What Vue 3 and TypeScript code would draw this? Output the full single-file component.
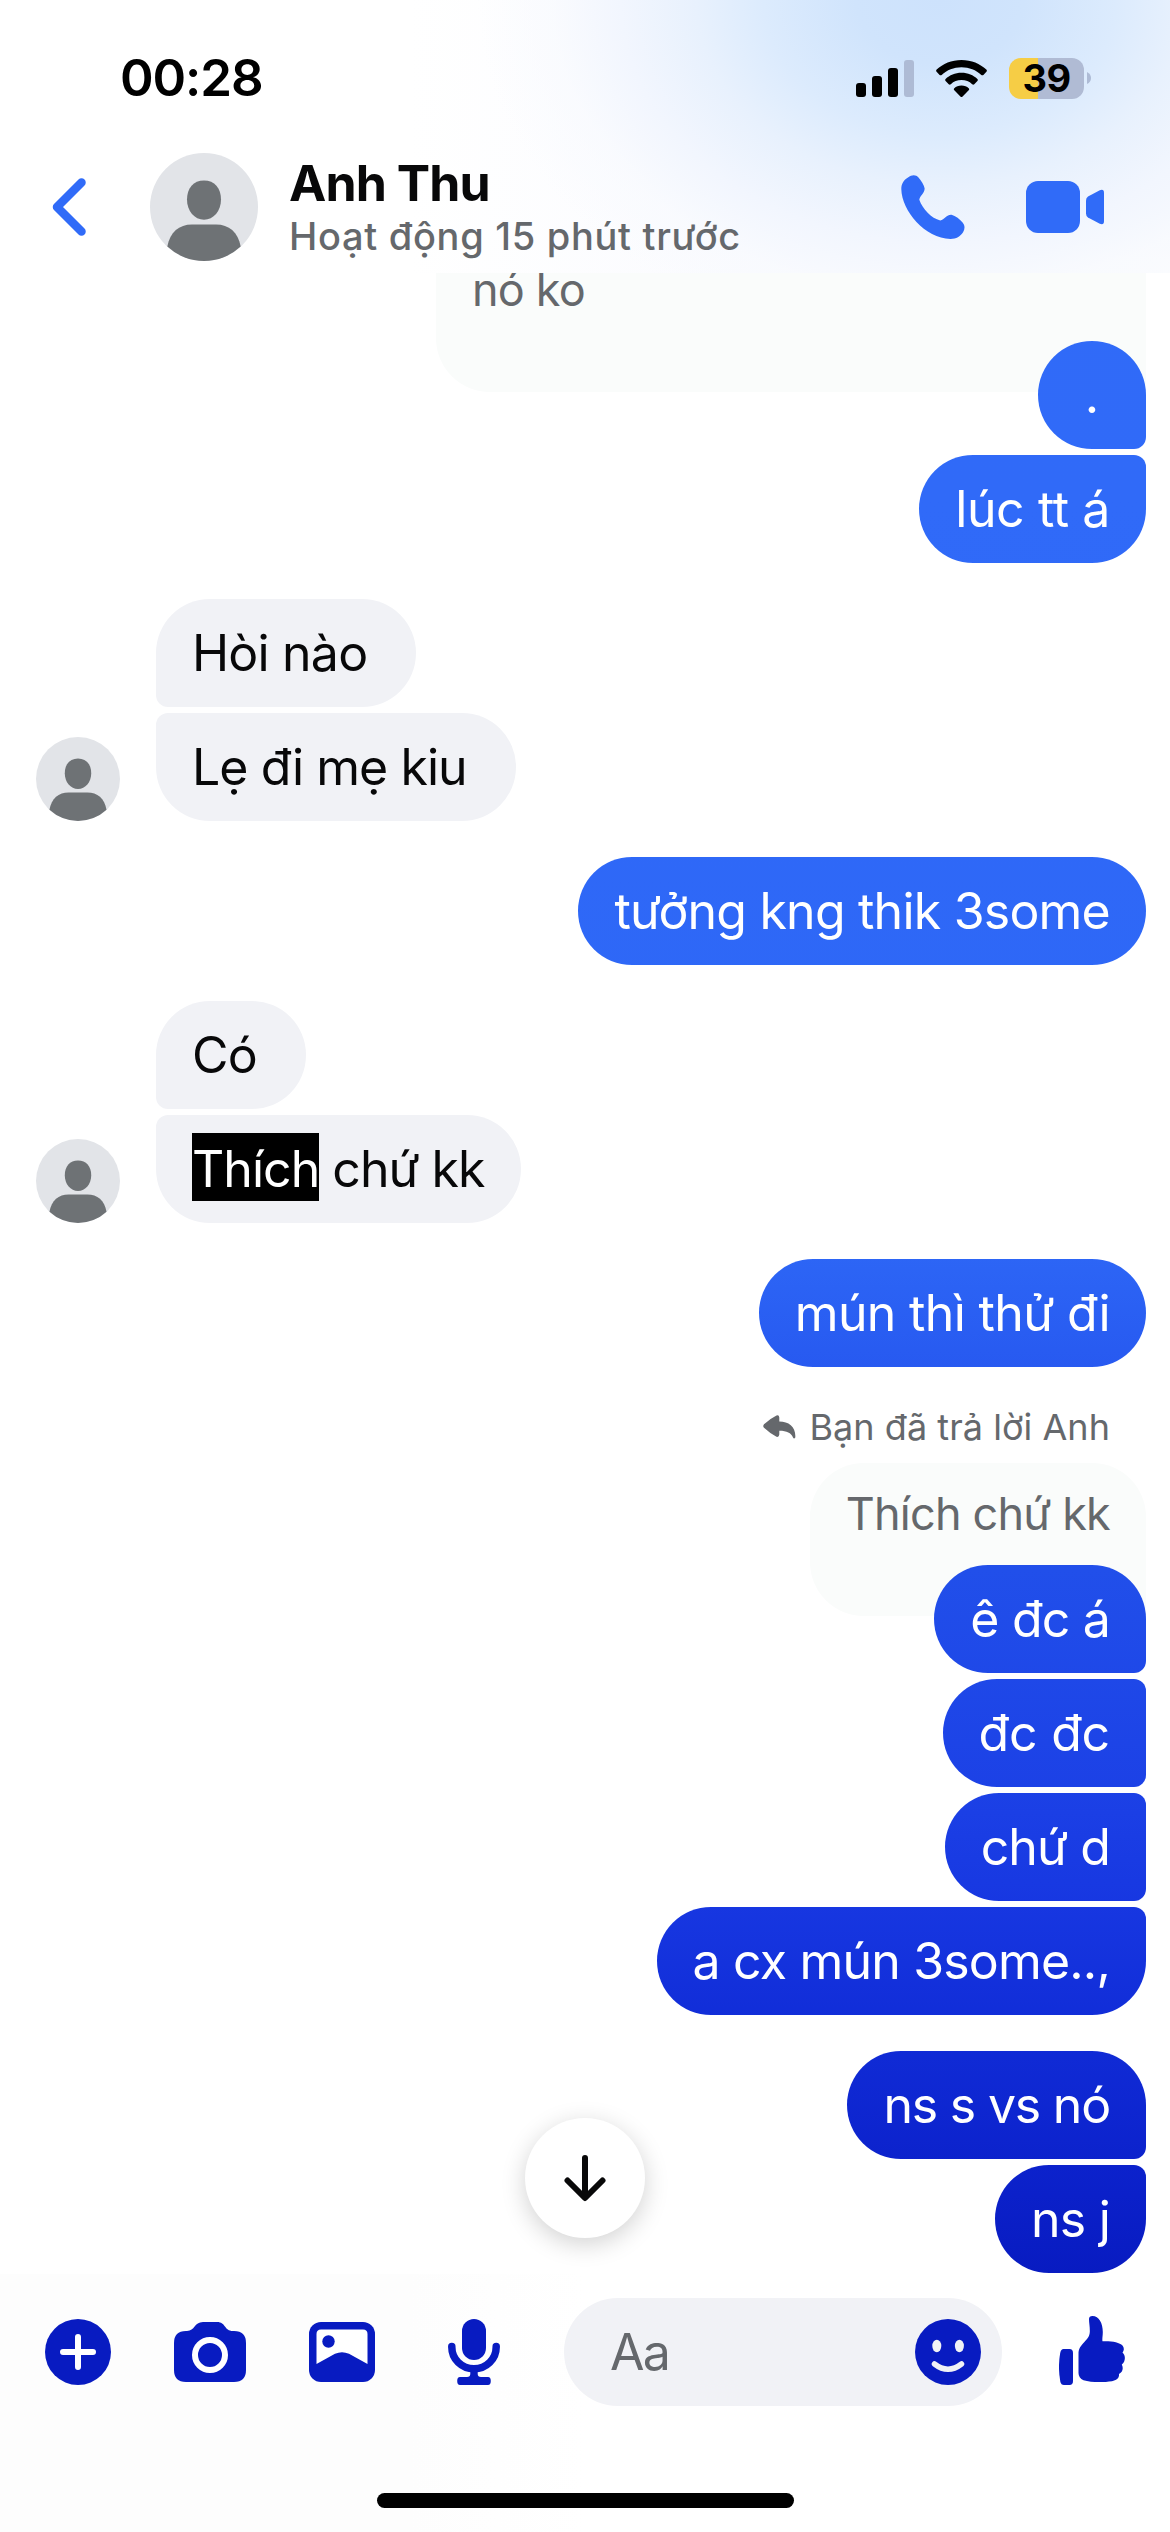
<script setup lang="ts">
interface Message {
  text: string
  mark?: string
  pos: 'single' | 'first' | 'middle' | 'last'
  tracking: number
  roomy?: boolean
}

interface Group {
  from: 'me' | 'them'
  replyLabel?: string
  quote?: string
  clipped?: boolean
  messages: Message[]
}

const groups: Group[] = [
  {
    from: 'me',
    quote: 'nó ko',
    clipped: true,
    messages: [
      { text: '.', pos: 'first', tracking: 0 },
      { text: 'lúc tt á', pos: 'last', tracking: -0.4 },
    ],
  },
  {
    from: 'them',
    messages: [
      { text: 'Hòi nào', pos: 'first', tracking: -0.8, roomy: true },
      { text: 'Lẹ đi mẹ kiu', pos: 'last', tracking: -0.95, roomy: true },
    ],
  },
  { from: 'me', messages: [{ text: 'tưởng kng thik 3some', pos: 'single', tracking: -0.78 }] },
  {
    from: 'them',
    messages: [
      { text: 'Có', pos: 'first', tracking: -0.8, roomy: true },
      { text: ' chứ kk', mark: 'Thích', pos: 'last', tracking: -0.97 },
    ],
  },
  { from: 'me', messages: [{ text: 'mún thì thử đi', pos: 'single', tracking: -0.66 }] },
  {
    from: 'me',
    replyLabel: 'Bạn đã trả lời Anh',
    quote: 'Thích chứ kk',
    messages: [
      { text: 'ê đc á', pos: 'first', tracking: -0.8 },
      { text: 'đc đc', pos: 'middle', tracking: -0.2 },
      { text: 'chứ d', pos: 'middle', tracking: -0.9 },
      { text: 'a cx mún 3some..,', pos: 'last', tracking: -0.82 },
    ],
  },
  {
    from: 'me',
    messages: [
      { text: 'ns s vs nó', pos: 'first', tracking: -1.2 },
      { text: 'ns j', pos: 'last', tracking: -0.8 },
    ],
  },
]
</script>

<template>
  <div class="screen">
    <header class="top">
      <div class="status">
        <span class="clock">00:28</span>
        <div class="indicators">
          <svg class="signal" width="58" height="37" viewBox="0 0 58 37">
            <rect x="0" y="23" width="10" height="14" rx="3" />
            <rect x="16" y="16" width="10" height="21" rx="3" />
            <rect x="32" y="8" width="10" height="29" rx="3" />
            <rect x="48" y="0" width="10" height="37" rx="3" fill="#aebbd5" />
          </svg>
          <svg class="wifi" width="51" height="37" viewBox="0 0 51 37">
            <path d="M25.5 0C35.3 0 44.2 3.8 50.3 9.6Q51.4 10.7 50.4 11.8L47.4 14.9Q46.4 15.8 45.3 14.9C40.1 10.1 33.2 7.3 25.5 7.3S10.9 10.1 5.7 14.9Q4.6 15.8 3.6 14.9L.6 11.8Q-.4 10.7 .7 9.6C6.8 3.8 15.7 0 25.5 0Z" />
            <path d="M25.5 12.7C32 12.7 37.4 15.1 41.4 18.9Q42.5 20 41.4 21.1L38.3 24.2Q37.3 25.1 36.2 24.2C33.3 21.6 29.7 20.1 25.5 20.1S17.700 21.600 14.800 24.200Q13.700 25.100 12.700 24.200L9.600 21.100Q8.500 20 9.600 18.900C13.600 15.100 19 12.700 25.500 12.700Z" />
            <path d="M25.5 25.6C28.5 25.6 30.9 26.6 32.7 28.2Q33.7 29.2 32.7 30.2L26.6 36.4Q25.5 37.4 24.4 36.4L18.3 30.2Q17.3 29.2 18.3 28.2C20.1 26.6 22.5 25.6 25.5 25.6Z" />
          </svg>
          <div class="battery"><span>39</span></div>
          <svg width="4" height="12" viewBox="0 0 4 12"><path d="M0 0Q4 2 4 6T0 12Z" fill="#aebbd5" /></svg>
        </div>
      </div>
      <div class="bar">
        <svg class="back" width="34" height="58" viewBox="0 0 34 58">
          <path d="M29.500 4.500L5 29L29.500 53.500" fill="none" stroke="#306bf8" stroke-width="8.500" stroke-linecap="round" stroke-linejoin="round" />
        </svg>
        <svg class="avatar" viewBox="0 0 108 108">
          <circle cx="54" cy="54" r="54" fill="#e2e4e8" />
          <path d="M54 27.500C64.500 27.500 71 35 71 46.500C71 58 63.500 66.700 54 66.700S37 58 37 46.500C37 35 43.500 27.500 54 27.500Z" fill="#6e7275" />
          <path d="M17.300 93.600C20 79 29 71.500 42 71.500H66C79 71.500 88 79 90.700 93.600A54 54 0 0 1 17.300 93.600Z" fill="#6e7275" />
        </svg>
        <div class="who">
          <span class="name">Anh Thu</span>
          <span class="active">Hoạt động 15 phút trước</span>
        </div>
        <svg class="call" width="64" height="64" viewBox="0 0 64 64">
          <path d="M7 2.500C11-.8 15-.5 17.500 2.500C20.500 6 23 10 23.600 13.200C24 18 18.700 20.800 18.300 24.800C21.500 34 30.500 43.500 39.300 45.400C43.500 44.600 46 39.200 50.500 39.700C54.500 40.800 59 44.200 61.800 47.700C64 50.600 64 54 62.200 57C59 61.800 55.500 63.700 49.500 64C24 63.500 .8 36 .3 14C.3 8.800 2.800 5 7 2.500Z" fill="#306bf8" />
        </svg>
        <svg class="video" width="78" height="52" viewBox="0 0 78 52">
          <rect width="54" height="52" rx="12" fill="#306bf8" />
          <path d="M62 15.500L73.800 9.300Q78 7.600 78 12V40Q78 44.400 73.800 42.700L62 36.500Q60 35.200 60 32.500V19.500Q60 16.800 62 15.500Z" fill="#306bf8" />
        </svg>
      </div>
    </header>

    <main class="chat">
      <section v-for="(g, i) in groups" :key="i" class="group" :class="g.from">
        <svg v-if="g.from === 'them'" class="small-avatar" viewBox="0 0 108 108">
          <circle cx="54" cy="54" r="54" fill="#e2e4e8" />
          <path d="M54 27.500C64.500 27.500 71 35 71 46.500C71 58 63.500 66.700 54 66.700S37 58 37 46.500C37 35 43.500 27.500 54 27.500Z" fill="#6e7275" />
          <path d="M17.300 93.600C20 79 29 71.500 42 71.500H66C79 71.500 88 79 90.700 93.600A54 54 0 0 1 17.300 93.600Z" fill="#6e7275" />
        </svg>
        <div class="stack">
          <div v-if="g.replyLabel" class="reply">
            <svg width="33" height="24" viewBox="0 0 33 24">
              <path d="M13.500 .5Q16 -.5 16.300 2.500V6.500C26 6.500 33 12 32.300 22.500Q31 24.500 30 22.500C28 18 24 15.800 16.300 15.800V19.500Q16 22.500 13.500 21.800Q6.500 18 1 12.800Q-.5 11 1 9.200Q6.500 4 13.500 .5Z" fill="#65686c" />
            </svg>
            <span>{{ g.replyLabel }}</span>
          </div>
          <div v-if="g.quote" class="quote" :class="{ clipped: g.clipped }">
            <span>{{ g.quote }}</span>
          </div>
          <div
            v-for="m in g.messages"
            :key="m.text"
            class="bubble"
            :class="[m.pos, { roomy: m.roomy }]"
            :style="{ letterSpacing: `${m.tracking}px` }"
          >
            <span><mark v-if="m.mark">{{ m.mark }}</mark>{{ m.text }}</span>
          </div>
        </div>
      </section>
      <button class="jump" type="button">
        <svg width="42" height="48" viewBox="0 0 42 48" fill="none" stroke="#080809" stroke-width="6" stroke-linecap="round" stroke-linejoin="round">
          <path d="M21 4V43M3.500 26.500L21 44L38.500 26.500" />
        </svg>
      </button>
    </main>

    <footer class="bottom">
      <div class="composer">
        <svg class="plus" width="66" height="66" viewBox="0 0 66 66">
          <circle cx="33" cy="33" r="33" fill="#081bc1" />
          <path d="M33 18V48M18 33H48" stroke="#fff" stroke-width="6" stroke-linecap="round" />
        </svg>
        <svg class="camera" width="72" height="60" viewBox="0 0 72 60">
          <path d="M12 9H13C21 9 20 0 29 0H43C52 0 50 9 59 9H60Q72 9 72 21V48Q72 60 60 60H12Q0 60 0 48V21Q0 9 12 9Z" fill="#081bc1" />
          <circle cx="36" cy="33" r="15" fill="none" stroke="#fff" stroke-width="6" />
        </svg>
        <svg class="photo" width="66" height="60" viewBox="0 0 66 60">
          <rect width="66" height="60" rx="12" fill="#081bc1" />
          <path d="M7.500 42V12Q7.500 7.500 12 7.500H54Q58.500 7.500 58.500 12V42L40 31.800Q33 28.500 26 31.800Z" fill="#fff" />
          <circle cx="19.500" cy="19.500" r="6.200" fill="#081bc1" />
        </svg>
        <svg class="mic" width="52" height="66" viewBox="0 0 52 66">
          <rect x="14" y="0" width="24" height="41" rx="12" fill="#081bc1" />
          <path d="M3.800 27.500V28C3.800 40 13.500 49.800 26 49.800S48.200 40 48.200 28V27.500" fill="none" stroke="#081bc1" stroke-width="7.500" stroke-linecap="round" />
          <path d="M22.300 50H29.700V55Q29.700 58 33 58H40Q42.800 58 42.800 62T40 66H12Q9.200 66 9.200 62T12 58H19Q22.300 58 22.300 55Z" fill="#081bc1" />
        </svg>
        <div class="field">
          <span>Aa</span>
          <svg width="66" height="66" viewBox="0 0 66 66">
            <circle cx="33" cy="33" r="33" fill="#081bc1" />
            <ellipse cx="21.800" cy="27" rx="4.500" ry="6.200" fill="#f1f2f6" />
            <ellipse cx="44.400" cy="27" rx="4.500" ry="6.200" fill="#f1f2f6" />
            <path d="M19.500 45Q33 55.500 46.500 45" fill="none" stroke="#f1f2f6" stroke-width="5.500" stroke-linecap="round" />
          </svg>
        </div>
        <svg class="like" width="66" height="69" viewBox="0 0 66 69">
          <path d="M4.500 33H10.500Q14 33 14 37V65Q14 69 10.500 69H5Q2 69 1.300 65.500Q-1.300 51 1.200 37Q2 33 4.500 33Z" fill="#081bc1" />
          <path d="M30 3Q30 0 33.500 0C40 0 43.800 7 43.800 16C43.800 20 43 23 43.500 25.200C52 24.800 60.500 26 63.500 29.500C65.500 32 65 34.500 63.500 36.500C67 39.500 66.500 46 62.800 48.500C64.500 52 64 55.500 60 58C60.500 62 57.500 64.500 53 65.200C44 66.500 32 66.500 24.500 64.200Q19.500 62 19.500 57V38C19.500 33 21 31 24 27.500C28 23 30.500 21 30.800 16C31 11 30 7 30 3Z" fill="#081bc1" />
        </svg>
      </div>
      <div class="home"></div>
    </footer>
  </div>
</template>

<style>
body {
  margin: 0;
  background: #fff;
}
</style>

<style scoped>
.screen {
  display: flex;
  flex-direction: column;
  width: 1170px;
  height: 2532px;
  overflow: hidden;
  background: #fff;
  font-family: Inter, "Liberation Sans", sans-serif;
  color: #080809;
}

.top {
  flex: none;
  height: 273px;
  background:
    radial-gradient(ellipse 420px 320px at 940px 0, #cde2fc 0%, #d0e4fc 20%, #dcebfd 42%, #e8f1fd 58%, #f2f6fe 76%, rgba(248, 250, 254, 0.700) 92%, rgba(252, 253, 254, 0) 110%),
    radial-gradient(ellipse 380px 260px at 1170px 0, #d8e8fc 0%, #eaf2fe 50%, rgba(250, 251, 254, 0) 100%),
    linear-gradient(90deg, #fff 35%, #f9fafe 70%, #fbfcfe 100%);
}

.status {
  display: flex;
  align-items: center;
  justify-content: space-between;
  height: 153px;
  padding: 3px 79px 0 120px;
  box-sizing: border-box;
}

.clock {
  font-size: 51px;
  font-weight: 600;
  line-height: 60px;
  letter-spacing: -1.100px;
  color: #000;
}

.indicators {
  display: flex;
  align-items: center;
}

.wifi {
  margin: 0 22px 0 22.500px;
}

.battery {
  display: flex;
  align-items: center;
  justify-content: center;
  width: 75px;
  height: 41px;
  margin-right: 3px;
  border-radius: 12px;
  background: linear-gradient(90deg, #f6cd45 29px, #b0bbd4 29px);
  color: #000;
  font-size: 38px;
  font-weight: 700;
  letter-spacing: -0.500px;
}

.bar {
  display: flex;
  align-items: center;
  height: 108px;
  padding-left: 52px;
}

.avatar {
  width: 108px;
  height: 108px;
  margin-left: 64px;
}

.who {
  display: flex;
  flex-direction: column;
  width: 612px;
  margin-left: 31px;
  white-space: nowrap;
}

.name {
  font-size: 50px;
  font-weight: 700;
  line-height: 58px;
  letter-spacing: -0.900px;
}

.active {
  font-size: 38px;
  font-weight: 500;
  line-height: 48px;
  letter-spacing: 0.700px;
  color: #65686c;
}

.video {
  margin-left: 61px;
}

.chat {
  position: relative;
  flex: none;
  height: 2001px;
}

.group {
  display: flex;
  align-items: flex-end;
  margin-bottom: 36px;
  padding: 0 24px 0 36px;
}

.me {
  justify-content: flex-end;
}

.small-avatar {
  width: 84px;
  height: 84px;
  margin-right: 36px;
}

.stack {
  display: flex;
  flex-direction: column;
  align-items: flex-start;
  gap: 6px;
}

.me .stack {
  align-items: flex-end;
}

.bubble {
  box-sizing: border-box;
  min-width: 108px;
  height: 108px;
  padding: 0 36px;
  border-radius: 54px;
  background: #f1f2f6;
  font-size: 50px;
  line-height: 108px;
  white-space: pre;
}

.roomy {
  padding-right: 49px;
}

.me .bubble {
  position: relative;
  background: linear-gradient(#306bf8 0, #306af8 500px, #2d66f6 1250px, #2759f0 1370px, #214fea 1570px, #1c41e6 1790px, #1737e1 1905px, #112dd8 2020px, #0c22cc 2165px, #081bc1 2275px) fixed;
  color: #fff;
  text-align: center;
}

.them .first {
  border-bottom-left-radius: 12px;
}

.them .last {
  border-top-left-radius: 12px;
}

.me .first {
  border-bottom-right-radius: 12px;
}

.me .middle {
  border-top-right-radius: 12px;
  border-bottom-right-radius: 12px;
}

.me .last {
  border-top-right-radius: 12px;
}

mark {
  padding: 6px 0 2px;
  background: #000;
  color: #fff;
}

.reply {
  display: flex;
  align-items: center;
  gap: 13px;
  height: 48px;
  margin: 0 36px 6px 0;
  font-size: 36px;
  line-height: 48px;
  letter-spacing: 0.050px;
  color: #65686c;
}

.quote {
  box-sizing: border-box;
  height: 153px;
  margin-bottom: -57px;
  padding: 24px 36px 0;
  border-radius: 54px 54px 0 54px;
  background: #fafcfb;
  font-size: 45px;
  line-height: 54px;
  letter-spacing: -0.800px;
  color: #65686c;
}

.quote.clipped {
  width: 710px;
  height: 119px;
  padding-top: 0;
  border-radius: 0 0 0 54px;
  overflow: hidden;
}

.quote.clipped span {
  display: block;
  margin-top: -10px;
}

.jump {
  position: absolute;
  left: 525px;
  bottom: 36px;
  display: flex;
  align-items: center;
  justify-content: center;
  width: 120px;
  height: 120px;
  padding: 0;
  border: 0;
  border-radius: 50%;
  background: #fff;
  box-shadow: 0 6px 24px rgba(0, 0, 0, 0.180);
}

.bottom {
  flex: 1;
  display: flex;
  flex-direction: column;
  align-items: center;
  background: linear-gradient(90deg, #fdfdfd 35%, #fff 50%);
}

.composer {
  display: flex;
  align-items: center;
  align-self: stretch;
  height: 108px;
  margin-top: 24px;
  padding: 0 45px;
}

.camera {
  margin-left: 63px;
}

.photo {
  margin-left: 63px;
}

.mic {
  margin-left: 73px;
}

.field {
  display: flex;
  align-items: center;
  justify-content: space-between;
  box-sizing: border-box;
  width: 438px;
  height: 108px;
  margin-left: 64px;
  padding: 0 21px 0 46px;
  border-radius: 54px;
  background: #f1f2f6;
  font-size: 50px;
  letter-spacing: -1.800px;
  color: #65686c;
}

.like {
  margin: 0 0 3px 57px;
}

.home {
  width: 417px;
  height: 15px;
  margin-top: 87px;
  border-radius: 8px;
  background: #000;
}
</style>
